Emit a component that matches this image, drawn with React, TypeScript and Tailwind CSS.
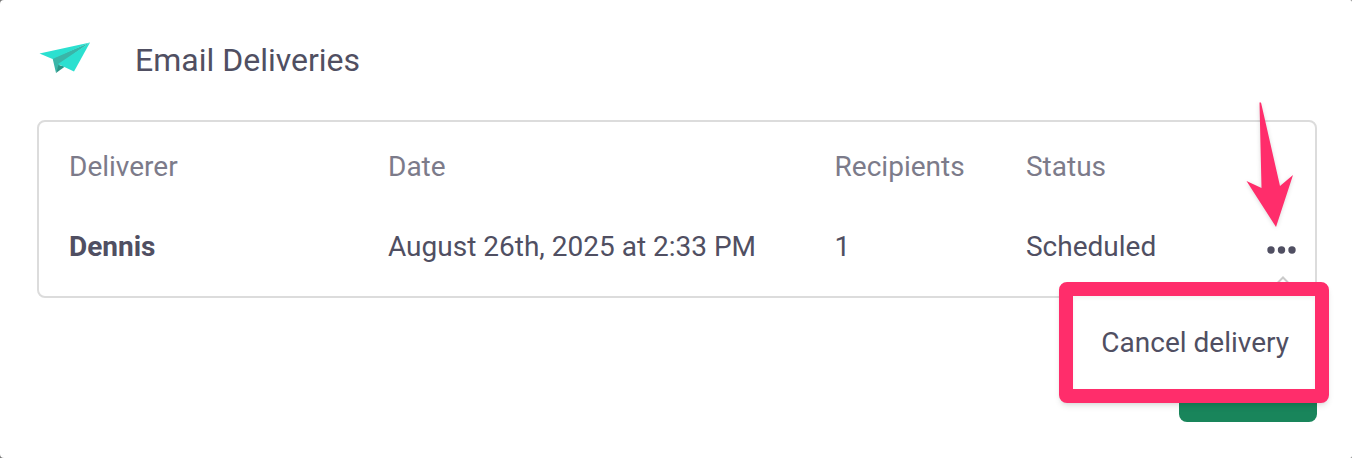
import { useState } from 'react'

const columns = [
  { label: 'Deliverer', width: 'w-[25%]' },
  { label: 'Date', width: 'w-[35%]' },
  { label: 'Recipients', width: 'w-[15%]' },
  { label: 'Status', width: 'w-[15%]' },
]

const deliveries = [
  {
    id: 1,
    deliverer: 'Dennis',
    date: 'August 26th, 2025 at 2:33 PM',
    recipients: 1,
    status: 'Scheduled',
  },
]

const PaperPlane = () => (
  <svg className="mb-1" width="52" height="32" viewBox="0 0 52 32" aria-hidden="true">
    <path d="M13.5 16 L51 0.5 L21 22 L17 31 Z" fill="#3ab5a8" />
    <path d="M17 31 L19.5 23 L26 24.5 Z" fill="#2a9586" />
    <path d="M0.5 11.5 L51 0.5 L13.5 17 Z" fill="#2be0d0" />
    <path d="M51 0.5 L35 29.5 L19 22 Z" fill="#2be0d0" />
  </svg>
)

const Arrow = () => (
  <svg
    className="pointer-events-none absolute right-[11px] bottom-full overflow-visible drop-shadow-sm"
    width="50"
    height="125"
    viewBox="0 0 50 125"
    aria-hidden="true"
  >
    <path d="M13.5 0.5 L15 0.5 L34 84 L47 73 L30 125 L0.5 79 L15.5 86 Z" fill="#ff2d6b" />
  </svg>
)

const DeliveryMenu = () => {
  const [open, setOpen] = useState(true)

  return (
    <div className="relative ml-auto w-[50px]">
      <Arrow />
      <button
        type="button"
        aria-label="Delivery actions"
        aria-expanded={open}
        onClick={() => setOpen(!open)}
        className="flex h-10 w-full items-center justify-center pt-1.5 text-[#504f62]"
      >
        <svg width="30" height="8" viewBox="0 0 30 8" fill="currentColor" aria-hidden="true">
          <circle cx="4" cy="4" r="3.7" />
          <circle cx="14.5" cy="4" r="3.7" />
          <circle cx="25" cy="4" r="3.7" />
        </svg>
      </button>

      {open && (
        <div className="absolute top-full -right-[22px] mt-[15px] rounded-lg border-14 border-[#ff2d6b] bg-[#ff2d6b] shadow-md">
          <svg
            className="absolute right-[26px] bottom-full mb-[14px]"
            width="12"
            height="6"
            viewBox="0 0 12 6"
            aria-hidden="true"
          >
            <path d="M0 7.5 L6 1.5 L12 7.5" fill="#fff" stroke="#cacaca" strokeWidth="2" />
          </svg>
          <button
            type="button"
            className="block bg-white py-7 pr-[26px] pl-7 leading-[37px] whitespace-nowrap inset-shadow-sm"
          >
            Cancel delivery
          </button>
        </div>
      )}
    </div>
  )
}

const App = () => {
  return (
    <div className="bg-[#777777]">
      <main className="min-h-screen rounded-l-[4px] rounded-r-[2px] bg-white pt-9 pr-[35px] pb-9 pl-[37px] font-[Roboto,sans-serif] text-[28px] text-[#504f62]">
        <header className="flex items-center gap-11 px-0.5">
          <PaperPlane />
          <h1 className="text-[32px] leading-12">Email Deliveries</h1>
        </header>

        <section className="mt-9 rounded-lg border-2 border-[#dcdcdc] pt-[5px] pb-[9px]">
          <table className="w-full table-fixed text-left">
            <thead>
              <tr className="h-20 text-[#7c7b8a]">
                {columns.map((column) => (
                  <th key={column.label} scope="col" className={`${column.width} pl-[30px] font-normal`}>
                    {column.label}
                  </th>
                ))}
                <td />
              </tr>
            </thead>
            <tbody>
              {deliveries.map((delivery) => (
                <tr key={delivery.id} className="h-20">
                  <td className="pl-[30px] font-bold">{delivery.deliverer}</td>
                  <td className="pl-[30px]">{delivery.date}</td>
                  <td className="pl-[30px]">{delivery.recipients}</td>
                  <td className="pl-[30px]">{delivery.status}</td>
                  <td className="pr-2">
                    <DeliveryMenu />
                  </td>
                </tr>
              ))}
            </tbody>
          </table>
        </section>

        <div className="mt-11 flex justify-end">
          <button type="button" aria-label="Schedule" className="h-20 w-[138px] rounded-lg bg-[#19855b]" />
        </div>
      </main>
    </div>
  )
}

export default App
